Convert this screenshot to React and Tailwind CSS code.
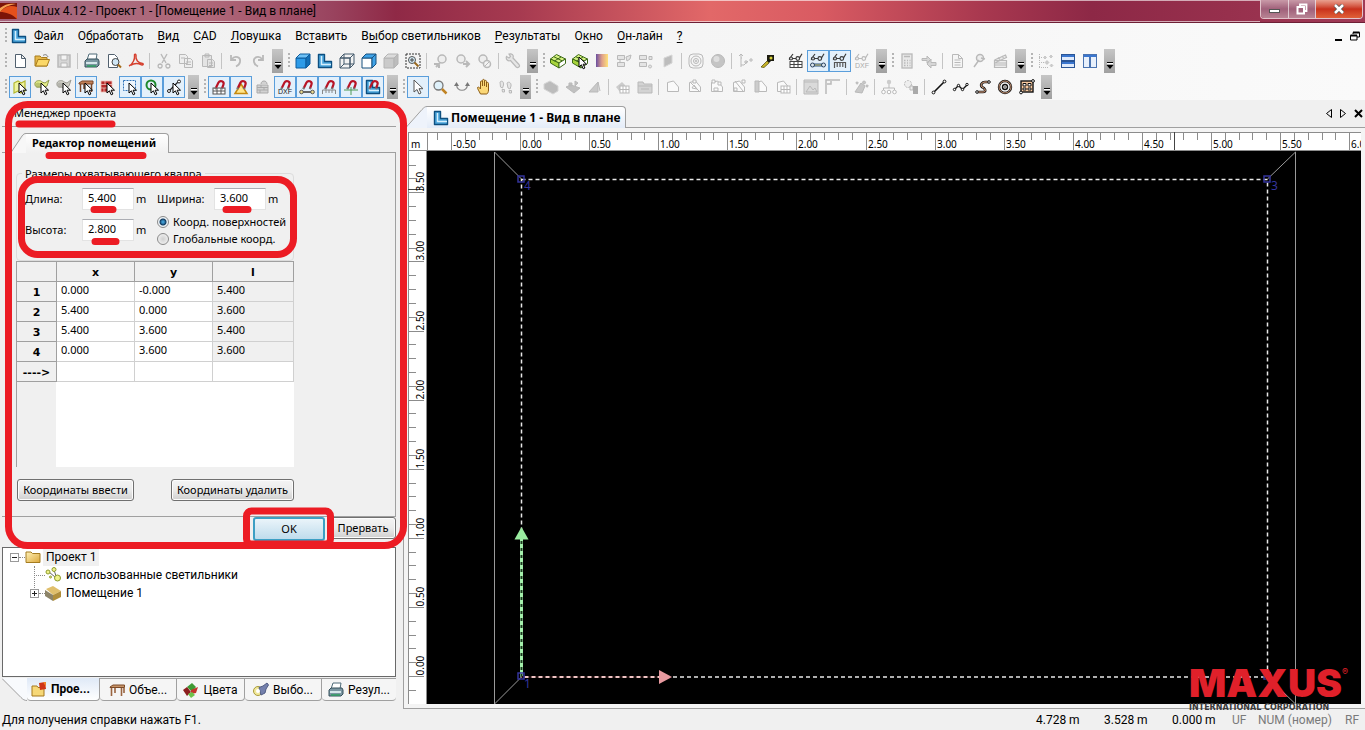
import React, { useState } from 'react';
import clsx from 'clsx';

const G = '#b9b9b9';
const G2 = '#d6d6d6';

const cursor = (x = 7, y = 4) => (
  <path
    transform={`translate(${x} ${y})`}
    d="M0 0v10l2.4-2.2 1.8 4 1.7-.8-1.8-3.8h3.4z"
    fill="#fff"
    stroke="#000"
    strokeWidth="1"
  />
);

const magnet = (
  <g fill="none">
    <path d="M4.800 9 7.500 3.500C9 .8 13.500 2.200 12.500 5.500L11 9.500" stroke="#b81426" strokeWidth="2.200" />
    <path d="M4.200 10.200l.8-1.600M10.800 10.200l.5-1.600" stroke="#777" strokeWidth="2.200" />
  </g>
);

const glasses = (c) => (
  <path d="M1.500 5.500a1.500 1.500 0 1 0 3 0 1.500 1.500 0 1 0-3 0l3.500-4.500M8 5.500a1.800 1.800 0 1 0 3.600 0 1.800 1.800 0 1 0-3.600 0M4.500 5.500H8M11.500 5 14 .8" fill="none" stroke={c} strokeWidth="1.200" />
);

const grid = (c, x, y, w, h) => (
  <g transform={`translate(${x} ${y})`} stroke={c} fill="#fff">
    <rect width={w} height={h} />
    <path d={`M${w / 3} 0v${h}M${(2 * w) / 3} 0v${h}M0 ${h / 2}h${w}`} />
  </g>
);

const dxf = (c) => (
  <text x="8" y="15" fontSize="7" textAnchor="middle" fill={c} fontFamily="Liberation Sans">DXF</text>
);

const cube = (front, top, side, stroke) => (
  <g stroke={stroke} strokeLinejoin="round">
    <path d="M1 5h10v10H1z" fill={front} />
    <path d="M1 5l4-4h10l-4 4z" fill={top} />
    <path d="M11 5l4-4v10l-4 4z" fill={side} />
  </g>
);

const box = (a, b, c) => (
  <g stroke={c} strokeWidth="1" strokeLinejoin="round">
    <path d="M.5 6l6-4.500 9 4.500-6.500 4z" fill={a} />
    <path d="M.5 6v4l8.500 5v-5z" fill={b} />
    <path d="M9 10v5l6.500-4.500V6z" fill="#fff" />
    <path d="M4 3.800l8 4M4.500 8 11 4" fill="none" />
  </g>
);

const lamp = (a, b) => (
  <>
    <path d="M1 4c1-3 6-3 7-1l3 1 4-3-2 6-4 2-4-1C2 9 .5 6.500 1 4z" fill={a} stroke={b} />
    <circle cx="4" cy="6" r="2.500" fill={b} opacity=".5" />
  </>
);

const ell = (
  <g strokeLinejoin="round">
    <path d="M1.500 1.500h6v7h7v6h-13z" fill="#4ba6dc" stroke="#0d4f80" strokeWidth="1.400" />
    <path d="M4.500 3v8.500H14" fill="none" stroke="#d6effc" strokeWidth="1.400" />
  </g>
);

const printer = (
  <>
    <path d="M5 1h8l-1 6H3z" fill="#fff" stroke="#4e6b78" />
    <path d="M1 8l2-2h11l1 2v4l-2 2H1z" fill="#7b96a1" stroke="#36505c" />
    <path d="M2 9h11v2H2z" fill="#d5e6ea" />
    <path d="M3 13h9" stroke="#2f9e62" strokeWidth="1.500" />
  </>
);

const folder = (
  <>
    <path d="M1 3h5l1.500 1.500H13V13H1z" fill="#e5b84a" stroke="#a87c1c" />
    <path d="M1.500 13 4 6.500h11.500L13 13z" fill="#fbd868" stroke="#a87c1c" />
    <path d="M9 2.500c2-1.500 4-1 5 1.500" fill="none" stroke="#777" />
  </>
);

const polyDoc = (extra) => (
  <g fill="#fafafa" stroke={G}>
    <path d="M2.500 12.500v-9l6-1.500 5 6v4.500z" />
    {extra}
  </g>
);

const ICONS = {
  new: <path d="M3.500 1.500h6l4 4v9h-10zM9.500 1.500v4h4" fill="#fff" stroke="#51606e" />,
  open: folder,
  save: <><path d="M2 2h12v12H2z" fill={G2} stroke={G} strokeWidth="1.500" /><path d="M5 2h6v5H5zM5 10h6v4H5z" fill="#f4f4f4" stroke={G} /></>,
  print: printer,
  preview: <><path d="M2.500 1.500h6l3 3v10h-9z" fill="#fff" stroke="#51606e" /><circle cx="9.500" cy="9" r="3.500" fill="#cfe6f5" stroke="#444" /><path d="M12 11.500l3 3" stroke="#a46b1a" strokeWidth="2" /></>,
  pdf: <path d="M1 13c4-2 6-7 5.500-10.500C6 .5 8.500.8 8 3c-.5 4 2 7 6.500 7.500 1.500.5.5 1.800-1 1.300C9 9.500 6 10 2.500 12.500" fill="none" stroke="#d5402f" strokeWidth="1.400" />,
  cut: <path d="M5 1l5 9M11 1 6 10M4 11a2 2 0 1 0 2 2.500c.3-1.500-.5-2.500-2-2.500M12 11a2 2 0 1 1-2 2.500c-.3-1.500.5-2.500 2-2.500" fill="none" stroke={G} strokeWidth="1.400" />,
  copy: <path d="M1.500 1.500h6l2 2v7h-8zM6.500 5.500h6l2 2v7h-8zM8 9h5M8 11.500h5M3 5h4" fill="#eee" stroke={G} />,
  paste: <path d="M2.500 2.500h9v11h-9zM5 1h4v3H5zM7.500 6.500h5l2 2v6h-7zM9 10h4M9 12.500h4" fill="#e4e4e4" stroke={G} />,
  undo: <path d="M3 2v5h5M3.500 6.500C7 2 13 4 12 9c-.4 2-2 3.500-4 4.500" fill="none" stroke={G} strokeWidth="1.800" />,
  redo: <path d="M13 2v5H8M12.500 6.500C9 2 3 4 4 9c.4 2 2 3.500 4 4.500" fill="none" stroke={G} strokeWidth="1.800" />,
  cubeBlue: cube('#2d9be8', '#6dc0f5', '#1270b8', '#0d5c9e'),
  ell,
  cubeWire: <><g>{cube('none', 'none', 'none', '#42596b')}</g><path d="M5 1v10h10M5 11l-4 4" stroke="#42596b" fill="none" /></>,
  cubeHalf: cube('#fff', '#3fa3e8', '#3fa3e8', '#16507f'),
  cubeGray: cube('#cacaca', '#dcdcdc', '#bdbdbd', '#b4b4b4'),
  zoomFit: <><path d="M1 1h14v14H1z" fill="none" stroke="#333" strokeDasharray="2 1" /><circle cx="7" cy="7" r="3.500" fill="#d6ecf7" stroke="#555" /><path d="M9.500 9.500l4 4" stroke="#9a6a20" strokeWidth="2" /><path d="M5 7h4M7 5v4" stroke="#444" /></>,
  bulbPrev: <><circle cx="9" cy="6" r="4" fill="#eee" stroke={G} strokeWidth="1.500" /><path d="M7 10l-4 4M1 11h5v4" stroke={G} strokeWidth="2" fill="none" /></>,
  bulbNext: <><circle cx="6" cy="6" r="4" fill="#eee" stroke={G} strokeWidth="1.500" /><path d="M8 11h6M11 8l3 3-3 3" stroke={G} strokeWidth="2" fill="none" /></>,
  bulbOff: <><circle cx="6" cy="6" r="4" fill="#eee" stroke={G} strokeWidth="1.500" /><circle cx="10" cy="11" r="3.500" fill="#f4f4f4" stroke={G} strokeWidth="1.500" /><path d="M8 13l4-4" stroke={G} /></>,
  wrench: <path d="M1.500 3.500l2.500 1.500L5.500 3.500 4 1c3-.8 5 1 4 4l6 6.500c1.500 2-1 4-2.800 2.500L5.500 7.500C3 8.500.5 6.500 1.500 3.500z" fill="#e6e6e6" stroke={G} strokeWidth="1.200" />,
  boxGreen: box('#d4f080', '#a7d43c', '#3d6a17'),
  boxCursor: <>{box('#d4f080', '#a7d43c', '#3d6a17')}{cursor()}</>,
  gradient: <><defs><linearGradient id="vg"><stop offset="0" stopColor="#6b4fa0" /><stop offset=".5" stopColor="#e0a08a" /><stop offset="1" stopColor="#ffe27a" /></linearGradient></defs><rect x="2" y="1" width="12" height="13" fill="url(#vg)" /></>,
  lightA: <path d="M1.500 2.500h7v4h-7zM1.500 9.500h7v4h-7zM4 9.500v-3M10 4l5-2-1 4-3 2z" fill="#e4e4e4" stroke={G} />,
  lightB: <path d="M1.500 2.500h7v4h-7zM1.500 9.500h7v4h-7zM11 3.500h3v3h-3zM12 12a1.500 1.500 0 1 0 .1 0" fill="#e4e4e4" stroke={G} />,
  plane: <path d="M4 5l8-3v8l-8 4z" fill="#bdbdbd" stroke={G2} />,
  rings: <g fill="none" stroke={G}><rect x="1" y="1" width="14" height="14" rx="4" /><circle cx="8" cy="8" r="5" /><circle cx="8" cy="8" r="2.500" /><circle cx="8" cy="8" r=".8" /></g>,
  sphere: <><circle cx="8" cy="8" r="6.500" fill="#c4c4c4" stroke={G} /><circle cx="6.500" cy="6" r="3" fill="#dedede" /></>,
  path: <path d="M3 1v13M1 3l2-2 2 2M3 5h1M7 8h2v2H7zM12 6h2v2h-2zM3 12h3l4-4" fill="none" stroke={G} />,
  torch: <><path d="M7 2h7v6h-3l-2 2-2-2z" fill="#1c1c10" /><path d="M1 14l6-6 2 2-5 4.500z" fill="#c8b428" stroke="#5a5210" strokeWidth=".8" /><circle cx="11" cy="5" r="1.500" fill="#d8d23a" /></>,
  glGrid: <>{glasses('#3a3a3a')}{grid('#444', 2, 8.500, 12, 6)}</>,
  glBone: <>{glasses('#3a3a3a')}<path d="M2.500 12h11" stroke="#2d5580" strokeWidth="3" /><circle cx="2.500" cy="12" r="2" fill="#dbe6ee" stroke="#2d4560" /><circle cx="13.500" cy="12" r="2" fill="#dbe6ee" stroke="#2d4560" /><path d="M5 12h6" stroke="#e3d27a" /></>,
  glRuler: <>{glasses('#3a3a3a')}<path d="M2.500 15v-5.500h11V15M5.200 9.500V14M8 9.500V14M10.800 9.500V14" fill="none" stroke="#555" strokeWidth="1.200" /></>,
  glDxf: <>{glasses(G)}{dxf('#aaa')}</>,
  calc: <><rect x="3" y="1" width="10" height="14" fill="#e8e8e8" stroke={G} strokeWidth="1.300" /><path d="M5 3.500h6M5 7.500h1.500M8 7.500h1M10.500 7.500h1M5 10h1.500M8 10h1M10.500 10h1M5 12.500h1.500M8 12.500h1M10.500 12.500h1" stroke={G} strokeWidth="1.500" /></>,
  swap: <path d="M1 5.500h5V3l3.500 3.500L6 10V7.500H1zM15 9.500h-5V6l-4 5 4 4v-2.500h5z" fill="#d6d6d6" stroke={G} />,
  doc: <path d="M3.500 1.500h6l4 4v9h-10zM5.500 7h6M5.500 9.500h6M5.500 12h6M9.500 1.500v4h4" fill="#f5f5f5" stroke={G} />,
  probe: <><circle cx="9" cy="5" r="3.500" fill="#eee" stroke={G} strokeWidth="1.500" /><path d="M8 7l-5 7M10 5l4 1" stroke={G} strokeWidth="1.500" /></>,
  clapper: <path d="M1.500 7.500h12v7h-12zM1.500 7l11-5 1 2.500-11 5M5 4.500l2 2M9 3l1.500 2M2 10h11M2 12h11" fill="#ececec" stroke={G} strokeWidth="1.200" />,
  tree: <><path d="M1.500 1v14M1 4.500h4M1 9.500h6M1 14.500h9" fill="none" stroke={G} strokeDasharray="1 1" /><path d="M7 3l1.500 1.500L7 6 5.500 4.500zM13 2l1.500 1.500L13 5l-1.500-1.500zM9 7.500l2 2-2 2-2-2zM13.500 11l1.500 1.500-1.500 1.500-1.500-1.500z" fill="#ccc" stroke={G} strokeWidth=".6" /></>,
  tileH: <g stroke="#2a5596"><rect x="1.500" y="1.500" width="13" height="6" fill="#dfeafb" /><rect x="1.500" y="8.500" width="13" height="6" fill="#dfeafb" /><path d="M2 3h12M2 10h12" stroke="#3a76cf" strokeWidth="2" /></g>,
  tileV: <g stroke="#4a73b0"><rect x="1.500" y="1.500" width="6" height="13" fill="#e8f0fb" /><rect x="8.500" y="1.500" width="6" height="13" fill="#e8f0fb" /><path d="M2 3h12" stroke="#3a76cf" strokeWidth="2" /></g>,

  selAll: <><path d="M2 4l4-2 3 2 4-2v10l-4 2-3-2-4 2z" fill="#eef5a0" stroke="#b5b833" strokeWidth="1.200" />{cursor()}</>,
  selLamp: <>{lamp('#e6ee8a', '#8f9a50')}{cursor()}</>,
  selSpot: <>{lamp('#cfcfc6', '#9c9c94')}{cursor()}</>,
  selTable: <><path d="M1 4l3-2h11v3H1z" fill="#c2825a" stroke="#7c4527" /><path d="M2.500 5v8M6 5v5M13.500 5v8" stroke="#7c4527" strokeWidth="1.500" />{cursor()}</>,
  selWall: <><path d="M1 2h11v11H1zM1 5.500h11M1 9h11M5 2v3.500M8 5.500V9M4 9v4" fill="#b52b2b" stroke="#f0c2b8" strokeWidth=".8" />{cursor()}</>,
  selRect: <><path d="M1.500 1.500h12v10h-12z" fill="#eef6fd" stroke="#2f72b8" strokeDasharray="2 1" />{cursor()}</>,
  selRing: <><circle cx="7" cy="6" r="4.500" fill="none" stroke="#1f8a2e" strokeWidth="2" />{cursor()}</>,
  selLine: <><path d="M2 13 13 2" stroke="#222" strokeWidth="1.200" /><circle cx="3" cy="12" r="1.500" fill="#fff" stroke="#222" /><circle cx="13" cy="2.500" r="1.500" fill="#fff" stroke="#222" />{cursor()}</>,
  mgGrid: <>{grid('#555', 2, 9, 12, 6)}{magnet}</>,
  mgAngle: <><path d="M2 14.500 8 5l6 9.500z" fill="#ffe58a" stroke="#c68a10" strokeWidth="1.500" />{magnet}</>,
  brick: <path d="M2 6h11v8H2zM2 8.500h11M2 11h11M6 6v2.500M9 8.500V11M5 11v3M6 5c0-4 6-4 6 0" fill="#d2d2d2" stroke="#aaa" />,
  mgDxf: <>{magnet}{dxf('#222')}</>,
  mgBone: <><path d="M3 13h10" stroke="#666" strokeWidth="2" /><circle cx="2.500" cy="13" r="1.800" fill="#ead98a" stroke="#555" /><circle cx="13.500" cy="13" r="1.800" fill="#ead98a" stroke="#555" />{magnet}</>,
  mgRuler: <><path d="M1.500 15v-4h13v4M5 11v3M8 11v3M11 11v3" fill="none" stroke="#888" />{magnet}</>,
  mgCross: <><path d="M1 11h14M8 8v8" stroke="#4c9a55" />{magnet}</>,
  mgEll: <>{ell}{magnet}</>,
  arrow: <path d="M4 1v12l3-2.500 2 4.500 2-1-2-4.300h4z" fill="#fff" stroke="#555" />,
  zoom: <><circle cx="6.500" cy="6.500" r="4.500" fill="#dff1fa" stroke="#777" strokeWidth="1.300" /><path d="M10 10l4.500 4.500" stroke="#c08324" strokeWidth="2.500" /></>,
  orbit: <><path d="M2.500 6c1 7 10 7 11 0" fill="none" stroke="#888" strokeWidth="1.200" /><path d="M0 7l2.500-4L5 7zM11 7l2.500-4L16 7z" fill="#777" /></>,
  hand: <path d="M4.500 15C3 12 1.500 10 1.500 8.500c1-1 2 0 3 1.500V3c0-1.500 2-1.500 2 0v4-5.500c0-1.500 2-1.500 2 0V7 2.500c0-1.500 2-1.500 2 0V8 4.500c0-1.500 2-1.500 2 0V11c0 2-1 4-2 4z" fill="#fbd878" stroke="#8a5a14" />,
  steps: <path d="M2 3c2-2 4 0 3.500 3L4.500 9 2.500 8zM4 10.500h2.500v2.500H4.500zM9 4c2-2 4.500 0 4 3L12 10l-2-1zM11 11.500h2.500V14H11.500z" fill="#e6e6e6" stroke={G} />,
  slab: <path d="M1 5l6-3 8 5v5l-5 3-9-5z" fill="#bcbcbc" stroke={G2} />,
  slab2: <path d="M1 8l5-2 9 3-6 5zM4 4h3v3H4zM10 2l3 2-3 3z" fill="#c0c0c0" stroke={G} />,
  slope: <path d="M2 13l9-10v10zM11 3l2 9" fill="#c9c9c9" stroke={G} />,
  meshA: <><path d="M1 8l6-5 3 3v5l-5 2z" fill="#ccc" />{grid(G, 5, 7, 9, 7)}</>,
  folderGray: <path d="M1 3h5l1 2h8v9H1zM1 7h14M4 10h8" fill="#d3d3d3" stroke={G} />,
  polyA: polyDoc(),
  polyB: polyDoc(<path d="M3 3l9 9M6 1h3v3H6zM5 9l2-3 3 4z" />),
  polyC: polyDoc(<path d="M3 1h3v3H3zM9 3h3v3H9zM5 9h4v3H5z" />),
  polyD: polyDoc(<path d="M4 2l8 10M11 1h3v3h-3zM3 9h3v3H3z" />),
  polyE: polyDoc(<path d="M2 2h4v11H2z" fill="#ccc" />),
  polyF: <>{polyDoc()}{grid(G, 6, 7, 9, 7)}</>,
  photo: <path d="M1 1h14v14H1zM1 3h14M3 13l4-6 3 4 2-2 2 4z" fill="#dadada" stroke={G} />,
  frame: <path d="M1 15V1h14M5 4v-.1M2 5h4V2" fill="none" stroke={G} strokeWidth="1.500" />,
  fill: <path d="M2 13l6-9 4 3-3 7zM11 2a1.500 1.500 0 1 0 .1 0M14 6a1 1 0 1 0 .1 0M4 3a1 1 0 1 0 .1 0" fill="#c8c8c8" stroke={G} />,
  org: <><path d="M8 5v4M2.500 11V9h11v2" fill="none" stroke={G} /><circle cx="8" cy="3" r="2.200" fill="#ccc" /><circle cx="2.500" cy="13" r="1.800" fill="#fff" stroke={G} /><circle cx="8" cy="13" r="1.800" fill="#fff" stroke={G} /><circle cx="13.500" cy="13" r="1.800" fill="#fff" stroke={G} /></>,
  copyObj: <><circle cx="5" cy="5" r="3.500" fill="#eee" stroke={G} strokeDasharray="2 1" /><path d="M7 7h3v4H7z" fill="#eee" stroke={G} /><path d="M10 7h5v8h-5z" fill="#aaa" /></>,
  line: <><path d="M3 13 13 3" stroke="#111" strokeWidth="1.600" /><circle cx="2.500" cy="13.500" r="1.400" fill="#fff" stroke="#111" /><circle cx="13.500" cy="2.500" r="1.400" fill="#fff" stroke="#111" /></>,
  poly: <><path d="M1.500 10.500l4-4 4 4 5-5" fill="none" stroke="#111" strokeWidth="1.400" /><g fill="#fff" stroke="#111"><circle cx="1.500" cy="10.500" r="1.200" /><circle cx="5.500" cy="6.500" r="1.200" /><circle cx="9.500" cy="10.500" r="1.200" /><circle cx="14" cy="5.500" r="1.200" /></g></>,
  curve: <><path d="M2 13h6c4 0 2-4-1-5-2-2 0-5 3-5h4" fill="none" stroke="#111" strokeWidth="2.600" /><path d="M2 13h6c4 0 2-4-1-5-2-2 0-5 3-5h4" fill="none" stroke="#f2b28c" /><circle cx="2" cy="13" r="1.300" fill="#fff" stroke="#111" /><circle cx="14" cy="3" r="1.300" fill="#fff" stroke="#111" /></>,
  target: <g fill="none"><circle cx="8" cy="8" r="6" stroke="#111" strokeWidth="2.400" /><circle cx="8" cy="8" r="6" stroke="#f2b28c" strokeWidth=".8" /><circle cx="8" cy="8" r="2.500" stroke="#111" strokeWidth="1.400" /><circle cx="8" cy="8" r=".8" fill="#111" /></g>,
  blocks: <><rect x="2" y="2" width="12" height="11" fill="#f7c9a0" stroke="#111" strokeWidth="1.400" /><path d="M4 4.500h3v2.500H4zM9 4.500h3v2.500H9zM4 9h3v2H4zM9 9h3v2H9z" fill="#fff" stroke="#111" /><circle cx="2" cy="13.500" r="1.400" fill="#fff" stroke="#111" /><circle cx="14" cy="2" r="1.400" fill="#fff" stroke="#111" /></>,

  project: <><path d="M1 5h5l1 1.500h6V15H1z" fill="#f6d878" stroke="#a5781c" /><path d="M8 2l6-1 1 7-6 1z" fill="#cf3418" /><path d="M12 1h3v5z" fill="#f08028" /></>,
  table: <><path d="M1 5l3-2h11.500v2.500H1z" fill="#c79468" stroke="#7c4a28" /><path d="M2.500 6v8M6 6v5M12.500 6v8M15 6v5" stroke="#9a6440" strokeWidth="1.600" /></>,
  colors: <><path d="M4 5l5-4 4 4-4 5z" fill="#3f9a34" /><path d="M0 8l4-3 4 5-4 4z" fill="#8c1f1f" /><path d="M8 8l7-3-2 6-5 1z" fill="#c3342c" /><path d="M5 12l4-2 3 3-4 3z" fill="#6cc24a" /></>,
  light: <><circle cx="5" cy="9" r="4.500" fill="#f1e89a" stroke="#a99b3a" /><path d="M6 5.500 10 4l4-3 1.500 2-2.500 4-1 4-4 2z" fill="#7480ac" stroke="#505c84" /><circle cx="5" cy="9" r="2" fill="#fff" /></>,
  closedFolder: (
    <>
      <defs><linearGradient id="fold" x2="1" y2="1"><stop offset="0" stopColor="#fff2b8" /><stop offset="1" stopColor="#dca83c" /></linearGradient></defs>
      <path d="M1 3h5l1.500 1.500H15V13.500H1z" fill="url(#fold)" stroke="#a57c20" />
    </>
  ),
  lamps: <g fill="#eef28a" stroke="#8d9a2c"><path d="M4 5l6 5M9 3l2 6" stroke="#666" /><circle cx="3" cy="5" r="2" /><circle cx="9" cy="2.500" r="2" /><circle cx="12.500" cy="11" r="3" /><circle cx="5.500" cy="10" r="1" /></g>,
  room: <><path d="M1 4l7-3 8 5-8 4z" fill="#e0bf6c" /><path d="M0 5l8 5v6L0 11z" fill="#8d8468" /><path d="M8 10l8-4v6l-8 4z" fill="#b08e3a" /></>,
};

const Icon = ({ name, className = 'h-4 w-4' }) => (
  <svg viewBox="0 0 16 16" className={clsx('shrink-0 overflow-visible', className)} aria-hidden="true">
    {ICONS[name]}
  </svg>
);

// '|' is a divider, '-' a blank gap, a leading '*' marks a pressed button
const rowOne = [
  ['new', 'open', 'save', '|', 'print', 'preview', 'pdf', '|', 'cut', 'copy', 'paste', '|', 'undo', 'redo'],
  ['cubeBlue', 'ell', 'cubeWire', 'cubeHalf', 'cubeGray', 'zoomFit', '|', 'bulbPrev', 'bulbNext', 'bulbOff', '|', 'wrench'],
  ['boxGreen', 'boxCursor', 'gradient', 'lightA', 'lightB', 'plane', '|', 'rings', 'sphere', '|', 'path', 'torch', '-', 'glGrid', '*glBone', '*glRuler', 'glDxf'],
  ['calc', 'swap', '|', 'doc', 'probe', 'clapper'],
  ['tree', 'tileH', 'tileV'],
];

const rowTwo = [
  ['*selAll', 'selLamp', 'selSpot', '*selTable', 'selWall', '*selRect', '*selRing', '*selLine'],
  ['*mgGrid', '*mgAngle', 'brick', '*mgDxf', '*mgBone', '*mgRuler', '*mgCross', '*mgEll'],
  ['*arrow', 'zoom', 'orbit', 'hand', 'steps'],
  ['slab', 'slab2', 'slope', '|', 'meshA', 'folderGray', '|', 'polyA', 'polyB', 'polyC', 'polyD', 'polyE', 'polyF', '|', 'photo', 'frame', '|', 'fill', '|', 'org', 'copyObj', '|', 'line', 'poly', 'curve', 'target', 'blocks'],
];

const ToolGroup = ({ items }) => (
  <div className="flex h-full shrink-0 items-center">
    <span className="ml-[5px] mr-[2px] h-4 w-[2px] bg-[repeating-linear-gradient(to_bottom,#b4b4b4_0_2px,transparent_2px_4px)]" />
    {items.map((item, i) => {
      if (item === '|') return <span key={i} className="mx-[2px] h-4 w-[2px] border-l border-[#c4c4c4]" />;
      if (item === '-') return <span key={i} className="w-[6px]" />;
      const pressed = item.startsWith('*');
      const name = item.replace('*', '');
      return (
        <button
          key={i}
          type="button"
          aria-label={name}
          className={clsx(
            'flex h-[22px] w-[22px] items-center justify-center border',
            pressed ? 'border-[#5a9edb] bg-[#e3f0fb]' : 'border-transparent',
          )}
        >
          <Icon name={name} />
        </button>
      );
    })}
    <button
      type="button"
      aria-label="more"
      className="ml-[3px] flex h-6 w-[11px] items-end justify-center bg-gradient-to-b from-[#c6c6c6] to-[#a0a0a0] pb-[3px]"
    >
      <svg viewBox="0 0 8 8" className="h-2 w-2">
        <path d="M1 .5h6" stroke="#000" />
        <path d="M1 1.500h6" stroke="#fff" />
        <path d="M.5 3h7L4 7z" fill="#000" />
      </svg>
    </button>
  </div>
);

const Toolbar = ({ groups }) => (
  <div className="flex h-[26px] items-center overflow-hidden">
    {groups.map((items, i) => (
      <ToolGroup key={i} items={items} />
    ))}
  </div>
);

// [before, hot key letter, after]
const menu = [
  ['', 'Ф', 'айл'],
  ['О', 'б', 'работать'],
  ['', 'В', 'ид'],
  ['', 'C', 'AD'],
  ['', 'Л', 'овушка'],
  ['Вс', 'т', 'авить'],
  ['В', 'ы', 'бор светильников'],
  ['', 'Р', 'езультаты'],
  ['О', 'к', 'но'],
  ['', 'О', 'н-лайн'],
  ['', '?', ''],
];

const TitleBar = () => (
  <header className="flex h-[23px] items-start border-b border-[#6d1f35] bg-[linear-gradient(90deg,#a4627a_0%,#a8687c_6%,#b0697a_15%,#9a4560_24%,#8f2946_29%,#a63a50_38%,#e26868_52%,#d95b62_60%,#a8384f_72%,#8d2846_80%,#97304d_90%,#a03a56_100%)]">
    <div className="flex h-[22px] flex-1 items-center gap-[5px] border-b border-t border-white/60">
      <svg viewBox="0 0 17 16" className="h-4 w-[17px]">
        <rect width="17" height="16" fill="#7c1408" />
        <path d="M0 9C5 3 11 2 17 4v12c-5-5-11-7-17-7z" fill="#e4501c" />
        <path d="M0 5C5 1 10 0 16 1 9 2 4 4 0 9z" fill="#f6a050" />
      </svg>
      <h1 className="font-['Roboto'] text-[12px] leading-4 text-black">
        DIALux 4.12 - Проект 1 - [Помещение 1 - Вид в плане]
      </h1>
    </div>
    <div className="mr-[2px] flex h-[19px] overflow-hidden rounded-b border border-t-0 border-white/70">
      <button type="button" aria-label="Свернуть" className="flex w-[28px] items-center justify-center border-r border-white/60 bg-gradient-to-b from-[#c99aa8] via-[#a0607a] to-[#b88494]">
        <span className="mt-1 h-[4px] w-[11px] border border-[#555] bg-white" />
      </button>
      <button type="button" aria-label="Восстановить" className="flex w-[27px] items-center justify-center border-r border-white/60 bg-gradient-to-b from-[#c99aa8] via-[#a0607a] to-[#b88494]">
        <svg viewBox="0 0 12 12" className="h-3 w-3" fill="none">
          <path d="M4 3V1.500h6.500V8H9" stroke="#fff" strokeWidth="1.800" />
          <rect x="1.500" y="4" width="6.500" height="6.500" stroke="#fff" strokeWidth="2" />
        </svg>
      </button>
      <button type="button" aria-label="Закрыть" className="flex w-[46px] items-center justify-center bg-gradient-to-b from-[#e8a090] via-[#c8301c] to-[#e06038]">
        <svg viewBox="0 0 12 10" className="h-[10px] w-3">
          <path d="M2 1l8 8M10 1 2 9" stroke="#555" strokeWidth="4" />
          <path d="M2 1l8 8M10 1 2 9" stroke="#fff" strokeWidth="2.500" />
        </svg>
      </button>
    </div>
  </header>
);

const MenuBar = () => (
  <nav className="flex h-[25px] items-center pl-[5px] font-['Roboto'] text-[12px] leading-4">
    <span className="h-4 w-[2px] bg-[repeating-linear-gradient(to_bottom,#b4b4b4_0_2px,transparent_2px_4px)]" />
    <Icon name="ell" className="ml-1 h-4 w-4" />
    <ul className="ml-[7px] flex gap-[14px]">
      {menu.map(([a, key, b]) => (
        <li key={a + key + b}>
          <a href="#menu" className="whitespace-nowrap">
            {a}<u className="underline-offset-2">{key}</u>{b}
          </a>
        </li>
      ))}
    </ul>
    <div className="ml-auto flex items-center gap-2 pr-[5px]">
      <button type="button" aria-label="Свернуть окно" className="mt-2 h-[2px] w-[7px] bg-black" />
      <button type="button" aria-label="Восстановить окно">
        <svg viewBox="0 0 10 10" className="h-[10px] w-[10px]" fill="none" stroke="#000">
          <path d="M3 3V1.500h6.500V6H7" />
          <path d="M3 1.500h6.500" strokeWidth="2" />
          <path d="M.5 4.500H7V9H.5z" />
          <path d="M.5 4.500H7" strokeWidth="2" />
        </svg>
      </button>
    </div>
  </nav>
);

const Field = ({ id, label, value, onChange }) => (
  <div className="flex h-[22px] items-center">
    <label htmlFor={id} className="w-[57px]">{label}</label>
    <input
      id={id}
      value={value}
      onChange={(e) => onChange(e.target.value)}
      className="h-[22px] w-[52px] border border-[#e3e3e3] border-t-[#abadb3] bg-white px-[5px] pb-[3px] outline-none"
    />
    <span className="ml-[2px]">m</span>
  </div>
);

const radioClass =
  'h-3 w-3 appearance-none rounded-full border border-[#8a8a8a] bg-[radial-gradient(circle,#d0d0d0,#f8f8f8)] checked:bg-[radial-gradient(circle,#3f9ad0_0_1px,#123a5e_3px,#eef4f8_4px)]';

const points = [
  ['0.000', '-0.000', '5.400'],
  ['5.400', '0.000', '3.600'],
  ['5.400', '3.600', '5.400'],
  ['0.000', '3.600', '3.600'],
];

const headCell = 'border border-[#a0a0a0] bg-[#f0f0f0] px-0 pb-0 pt-[2px] text-center font-["DejaVu_Sans"] text-[11px] leading-4 font-bold';
const bodyCell = 'border border-[#d0d0d0] px-1 py-0 align-top leading-4';

const CoordTable = () => (
  <div className="mr-[101px] flex h-[206px] flex-col bg-[linear-gradient(to_right,#a0a0a0_0_1px,#f0f0f0_1px_40px,#ffffff_40px)]">
    <table className="w-full table-fixed border-collapse">
      <colgroup>
        <col className="w-10" />
        <col className="w-[78px]" />
        <col className="w-[78px]" />
        <col />
      </colgroup>
      <thead>
        <tr className="h-5">
          <th className={headCell} />
          {['x', 'y', 'l'].map((h) => (
            <th key={h} scope="col" className={headCell}>{h}</th>
          ))}
        </tr>
      </thead>
      <tbody>
        {points.map((row, i) => (
          <tr key={i} className="h-5">
            <th scope="row" className={headCell}>{i + 1}</th>
            <td className={clsx(bodyCell, 'bg-white')}>{row[0]}</td>
            <td className={clsx(bodyCell, 'bg-white')}>{row[1]}</td>
            <td className={clsx(bodyCell, 'bg-[#f0f0f0]')}>{row[2]}</td>
          </tr>
        ))}
        <tr className="h-5">
          <th scope="row" className={headCell}>----&gt;</th>
          <td className={clsx(bodyCell, 'bg-white')} />
          <td className={clsx(bodyCell, 'bg-white')} />
          <td className={clsx(bodyCell, 'bg-white')} />
        </tr>
      </tbody>
    </table>
  </div>
);

const btn =
  'h-[22px] whitespace-nowrap rounded-[3px] border border-[#707070] bg-gradient-to-b from-[#f4f4f4] via-[#ebebeb] to-[#cfcfcf] shadow-[inset_0_0_0_1px_#fcfcfc]';

const bottomTabs = [
  ['table', 'Объе...', 'w-[77px]'],
  ['colors', 'Цвета', 'w-[68px]'],
  ['light', 'Выбо...', 'w-[77px]'],
  ['print', 'Резул...', 'w-[74px]'],
];

const ProjectManager = () => {
  const [size, setSize] = useState({ length: '5.400', width: '3.600', height: '2.800' });
  const [coord, setCoord] = useState('surface');
  const set = (key) => (value) => setSize({ ...size, [key]: value });

  return (
    <aside className="flex w-[403px] shrink-0 flex-col pl-[2px] pr-[7px]">
      <h2 className="flex h-[27px] items-center border-b border-[#a0a0a0] pl-3">Менеджер проекта</h2>

      <div className="flex h-[26px] items-end">
        <svg viewBox="0 0 24 20" className="h-5 w-6 shrink-0">
          <path d="M0 19.500h8.500L24 .5V20H0z" fill="#f7f7f7" />
          <path d="M0 19.500h9L20 3C21.500 1 22.500.5 24 .5" fill="none" stroke="#a0a0a0" />
        </svg>
        <div className="flex h-5 items-center rounded-tr border-r border-t border-[#a0a0a0] bg-gradient-to-b from-white to-[#f0f0f0] pl-[6px] pr-3 font-bold">
          Редактор помещений
        </div>
        <span className="h-full flex-1 border-b border-[#a0a0a0]" />
      </div>

      <section className="border-b border-r border-[#a0a0a0] pb-[15px] pl-[14px]">
        <fieldset className="relative mr-[101px] mt-5 h-[88px] rounded border border-[#dcdcdc] pl-2 pt-[14px]">
          <legend className="absolute -top-2 left-[5px] bg-[#f0f0f0] px-[3px] leading-4">Размеры охватывающего квадра</legend>
          <div className="flex">
            <div className="flex w-[132px] flex-col gap-[9px]">
              <Field id="len" label="Длина:" value={size.length} onChange={set('length')} />
              <Field id="hgt" label="Высота:" value={size.height} onChange={set('height')} />
            </div>
            <div>
              <Field id="wid" label="Ширина:" value={size.width} onChange={set('width')} />
              <div className="mt-[3px] leading-[17px]">
                <label className="flex items-center gap-1 whitespace-nowrap">
                  <input type="radio" name="coord" className={radioClass} checked={coord === 'surface'} onChange={() => setCoord('surface')} />
                  Коорд. поверхностей
                </label>
                <label className="flex items-center gap-1 whitespace-nowrap">
                  <input type="radio" name="coord" className={radioClass} checked={coord === 'global'} onChange={() => setCoord('global')} />
                  Глобальные коорд.
                </label>
              </div>
            </div>
          </div>
        </fieldset>
        <CoordTable />
        <div className="mr-[101px] mt-3 flex justify-between pl-px">
          <button type="button" className={clsx(btn, 'w-[117px]')}>Координаты ввести</button>
          <button type="button" className={clsx(btn, 'w-[123px]')}>Координаты удалить</button>
        </div>
      </section>

      <div className="flex h-[30px] justify-end gap-[5px]">
        <button type="button" className="h-6 w-[72px] rounded-[3px] border-2 border-[#3c9fc4] bg-gradient-to-b from-[#eaf4fa] to-[#bfdcec]">OK</button>
        <button type="button" className={clsx(btn, 'w-[66px]')}>Прервать</button>
      </div>

      <div className="relative flex-1 border border-[#696969] bg-white pl-[7px] font-['Roboto'] text-[12px] leading-[18px]">
        <span className="absolute left-[31px] top-[18px] h-6 border-l border-dotted border-[#888]" />
        <div className="flex items-center">
          <Expander sign="-" />
          <Icon name="closedFolder" className="mr-[2px] h-4 w-4" />
          <span className="bg-[#f0f0f0] px-[3px]">Проект 1</span>
        </div>
        <div className="flex items-center pl-6">
          <span className="w-[11px] border-t border-dotted border-[#888]" />
          <Icon name="lamps" className="mr-[5px] h-4 w-4" />
          <span>использованные светильники</span>
        </div>
        <div className="relative flex items-center pl-5">
          <Expander sign="+" />
          <Icon name="room" className="mr-[5px] h-4 w-4" />
          <span>Помещение 1</span>
        </div>
      </div>

      <div className="flex h-8 items-start pt-px font-['Roboto'] text-[12px]">
        <svg viewBox="0 0 25 23" className="h-[23px] w-[25px] shrink-0">
          <path d="M0 0l20 20c1.500 1.500 3 2.500 5 2.500V0z" fill="#f8fafd" />
          <path d="M0 .5 19 19.500c2 2 3.500 3 6 3" fill="none" stroke="#a0a0a0" />
        </svg>
        <button type="button" className="flex h-[23px] w-[73px] items-center gap-1 rounded-b border-b border-r border-[#a0a0a0] bg-gradient-to-b from-[#dfe9f7] to-white pl-1 font-bold">
          <Icon name="project" /> Прое...
        </button>
        {bottomTabs.map(([icon, label, width]) => (
          <button
            key={label}
            type="button"
            className={clsx('flex h-[23px] items-center justify-center gap-1 rounded-b border-b border-r border-t border-[#a0a0a0] bg-[#f5f5f5] last:border-r-0', width)}
          >
            <Icon name={icon} /> {label}
          </button>
        ))}
      </div>
    </aside>
  );
};

const Expander = ({ sign }) => (
  <>
    <button type="button" aria-label={sign} className="flex h-[9px] w-[9px] items-center justify-center border border-[#9a9a9a] bg-white">
      <svg viewBox="0 0 5 5" className="h-[5px] w-[5px]" stroke="#222">
        <path d={sign === '+' ? 'M0 2.500h5M2.500 0v5' : 'M0 2.500h5'} />
      </svg>
    </button>
    <span className="w-[6px] border-t border-dotted border-[#888]" />
  </>
);

// drawing scale, pixels per 0.1 m, and the room origin inside the canvas
const STEP = 13.82;
const ORIGIN = { x: 94, y: 525 };

const TopRuler = () => {
  const ticks = [];
  for (let i = -6; i <= 60; i++) ticks.push(i);
  return (
    <svg className="h-[19px] w-full bg-white" fontFamily="Noto Sans" fontSize="10">
      <path d="M0 .5H4000M.5 0v18" stroke="#8c8c8c" />
      <path d="M0 18.500H4000" stroke="#8c8c8c" />
      <path d="M747.500 0v18" stroke="#444" />
      {ticks.map((i) => {
        const x = Math.round(ORIGIN.x + i * STEP) - 0.5;
        return (
          <g key={i}>
            <path d={`M${x} 1v${i % 5 === 0 ? 17 : 7}`} stroke="#8c8c8c" />
            {i % 5 === 0 && <text x={x + 1.500} y="16">{(i / 10).toFixed(2)}</text>}
          </g>
        );
      })}
    </svg>
  );
};

const LeftRuler = () => {
  const ticks = [];
  for (let i = -1; i <= 37; i++) ticks.push(i);
  return (
    <svg className="h-full w-[19px] shrink-0 bg-white" fontFamily="Noto Sans" fontSize="10">
      <path d="M.5 0V4000M18.500 0V4000" stroke="#8c8c8c" />
      <path d="M0 38.500h16" stroke="#444" />
      {ticks.map((i) => {
        const y = Math.round(ORIGIN.y - i * STEP) + 0.5;
        return (
          <g key={i}>
            <path d={`M0 ${y}h${i % 5 === 0 ? 16 : 8}`} stroke="#8c8c8c" />
            {i % 5 === 0 && (
              <text transform={`translate(16 ${y - 1}) rotate(-90)`}>{(i / 10).toFixed(2)}</text>
            )}
          </g>
        );
      })}
    </svg>
  );
};

const PlanCanvas = () => (
  <svg className="h-full min-w-0 flex-1 bg-black">
    <g stroke="#9a9a9a" fill="none">
      <path d="M67.500 1V553M868.500 1V553" />
      <path d="M67.500 1l27 27M868.500 1l-28 27M67.500 553l27-27M868.500 553l-28-27" />
    </g>
    <path d="M94.500 28.500H840.500V526H94.500z" fill="none" stroke="#e8e8e8" strokeWidth="1.500" strokeDasharray="4 3" />
    <path d="M94.500 526V386" stroke="#a4f0ac" strokeWidth="3" />
    <path d="M94.500 526V386" stroke="#1c3a20" strokeDasharray="3 4" strokeWidth="2" />
    <path d="M87.500 388.500h14L94.500 376z" fill="#9aeca0" />
    <path d="M94.500 526H233" stroke="#f0c4c4" strokeWidth="2" />
    <path d="M94.500 526H233" stroke="#221010" strokeDasharray="3 4" strokeWidth="2" />
    <path d="M232 519v14l13-7z" fill="#e89aa0" />
    <g fill="none" stroke="#34349c" strokeWidth="1.500">
      <rect x="91" y="25" width="6" height="6" />
      <rect x="837" y="25" width="6" height="6" />
      <rect x="91" y="522" width="6" height="6" />
      <rect x="837" y="522" width="6" height="6" />
    </g>
    <g fill="#34349c" fontFamily="Noto Sans" fontSize="12">
      <text x="97" y="39">4</text>
      <text x="844" y="39">3</text>
      <text x="97" y="537">1</text>
    </g>
  </svg>
);

const PlanView = () => (
  <main className="flex min-w-0 flex-1 flex-col">
    <div className="flex h-[28px] items-end">
      <svg viewBox="0 0 24 22" className="h-[22px] w-6 shrink-0">
        <path d="M3 21.500 20 3.500C21.500 1.500 22.500 .5 24 .5V22H3z" fill="#eef3fb" />
        <path d="M0 21.500h3L19 3.500C21 1.500 22 .5 24 .5" fill="none" stroke="#a0a0a0" />
      </svg>
      <div className="flex h-[22px] items-center gap-[2px] rounded-tr border-r border-t border-[#a0a0a0] bg-gradient-to-b from-white to-[#e4ecf8] pl-[6px] pr-1 font-['Noto_Sans'] text-[12px] font-bold">
        <Icon name="ell" />
        Помещение 1 - Вид в плане
      </div>
      <div className="flex h-full flex-1 items-center justify-end gap-2 border-b border-[#a0a0a0] pr-[2px]">
        <button type="button" aria-label="Назад">
          <svg viewBox="0 0 6 9" className="h-[9px] w-[6px]"><path d="M5.500.5v8l-5-4z" fill="none" stroke="#000" /></svg>
        </button>
        <button type="button" aria-label="Вперёд">
          <svg viewBox="0 0 6 9" className="h-[9px] w-[6px]"><path d="M.5.5v8l5-4z" fill="none" stroke="#000" /></svg>
        </button>
        <button type="button" aria-label="Закрыть вид">
          <svg viewBox="0 0 9 9" className="h-[9px] w-[9px]"><path d="M1 1l7 7M8 1 1 8" stroke="#000" strokeWidth="2" /></svg>
        </button>
      </div>
    </div>
    <div className="flex flex-1 flex-col border-b border-l border-[#a0a0a0] bg-[#f4f4f4] pb-1 pl-1 pr-1 pt-1">
      <div className="flex">
        <span className="h-[19px] w-[19px] shrink-0 border border-r-0 border-[#8c8c8c] bg-white pl-[2px] font-['Noto_Sans'] text-[10px] leading-[22px]">m</span>
        <TopRuler />
      </div>
      <div className="flex min-h-0 flex-1">
        <LeftRuler />
        <PlanCanvas />
      </div>
    </div>
  </main>
);

// red marker strokes over the room editor
const Markers = () => (
  <svg className="pointer-events-none absolute left-0 top-0 h-[560px] w-[412px]" fill="none" stroke="#ec1c24" strokeWidth="7" strokeLinecap="round">
    <rect x="8.500" y="104.500" width="395" height="441" rx="19" />
    <rect x="21.500" y="179.500" width="272" height="75" rx="16" />
    <rect x="246.500" y="511" width="84" height="33" rx="5" />
    <path d="M19 124h93M49 155.500h94M94 209.500h19M226 209.500h22M95 241.500h21" />
  </svg>
);

const StatusBar = () => (
  <footer className="flex h-[21px] items-center bg-[#f0f0f0] px-[2px] font-['Roboto'] text-[12px] leading-4">
    <p className="flex-1">Для получения справки нажать F1.</p>
    <span className="w-[68px]">4.728 m</span>
    <span className="w-[68px]">3.528 m</span>
    <span className="w-[60px]">0.000 m</span>
    <span className="w-[26px] text-[#7a7a7a]">UF</span>
    <span className="w-[87px] text-[#7a7a7a]">NUM (номер)</span>
    <span className="w-[18px] text-[#7a7a7a]">RF</span>
  </footer>
);

const App = () => (
  <div className="relative flex min-h-screen flex-col overflow-hidden bg-[#f0f0f0] font-['Noto_Sans','Open_Sans',sans-serif] text-[11px] text-black">
    <TitleBar />
    <div className="bg-gradient-to-r from-[#f0f0f0] to-[#fafafa]">
      <MenuBar />
      <Toolbar groups={rowOne} />
      <Toolbar groups={rowTwo} />
    </div>
    <div className="flex flex-1">
      <ProjectManager />
      <PlanView />
    </div>
    <StatusBar />
    <Markers />
    <div className="pointer-events-none absolute bottom-[18px] right-[14px] w-[162px]">
      <div className="flex items-start font-['Inter'] font-black text-[#e0202a]">
        <span className="text-[39px] leading-[42px]">MAXUS</span>
        <span className="pt-1 text-[9px] font-normal leading-3">®</span>
      </div>
      <div className="whitespace-nowrap font-['DejaVu_Sans'] text-[8px] font-bold leading-[8px] text-[#3a3a3a]">INTERNATIONAL CORPORATION</div>
    </div>
  </div>
);

export default App;
